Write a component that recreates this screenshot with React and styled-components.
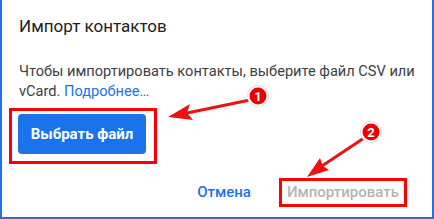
import React from "react";
import styled, { createGlobalStyle } from "styled-components";

const GlobalStyle = createGlobalStyle`
  html, body {
    margin: 0;
    padding: 0;
    background: #ffffff;
  }
  * {
    box-sizing: border-box;
  }
`;

const Dialog = styled.div`
  position: relative;
  width: 434px;
  height: 219px;
  background: #ffffff;
  border: 2px solid #1f72e6;
  border-top: none;
  padding: 16px 25px 11px 17px;
  display: flex;
  flex-direction: column;
  font-family: Roboto, "Liberation Sans", sans-serif;
  overflow: hidden;
`;

const Title = styled.h2`
  margin: 0;
  font-size: 17px;
  line-height: 20px;
  font-weight: 400;
  color: #202124;
`;

const Text = styled.p`
  margin: 25px -12px 0 0;
  font-size: 14.6px;
  line-height: 20px;
  color: #3c4043;
`;

const Link = styled.a`
  color: #1a73e8;
  text-decoration: none;
`;

const Highlight = styled.div`
  align-self: ${(p) => (p.$end ? "auto" : "flex-start")};
  border: 3px solid #ff0000;
  padding: ${(p) => p.$pad};
  margin-left: ${(p) => (p.$end ? "0" : "-10px")};
  margin-top: ${(p) => (p.$end ? "0" : "7px")};
`;

const PrimaryButton = styled.button`
  display: block;
  width: 128px;
  height: 40px;
  border: none;
  border-radius: 4px;
  background: #1a73e8;
  color: #ffffff;
  font-family: Roboto, "Liberation Sans", sans-serif;
  font-size: 15px;
  font-weight: 700;
  padding: 0;
  cursor: pointer;
`;

const Footer = styled.div`
  margin-top: 14px;
  display: flex;
  justify-content: flex-end;
  align-items: center;
  gap: 20px;
`;

const TextButton = styled.button`
  border: none;
  background: none;
  padding: 0 ${(p) => (p.$tight ? "0" : "8px")};
  height: 23px;
  line-height: 23px;
  font-family: Roboto, "Liberation Sans", sans-serif;
  font-size: 15px;
  font-weight: 500;
  color: ${(p) => (p.disabled ? "#b3b4b6" : "#1a73e8")};
  cursor: ${(p) => (p.disabled ? "default" : "pointer")};
`;

const Overlay = styled.svg`
  position: absolute;
  left: 0;
  top: 0;
  pointer-events: none;
`;

function Badge({ cx, cy, n }) {
  return (
    <g>
      <circle cx={cx} cy={cy} r="11" fill="#e2e2e2" />
      <circle cx={cx} cy={cy} r="10" fill="#ffffff" />
      <circle cx={cx} cy={cy} r="8.5" fill="#ee0000" />
      <text
        x={cx}
        y={cy + 4.5}
        textAnchor="middle"
        fontFamily="Roboto, 'Liberation Sans', sans-serif"
        fontWeight="700"
        fontSize="13"
        fill="#ffffff"
      >
        {n}
      </text>
    </g>
  );
}

function Arrows() {
  return (
    <Overlay width="434" height="219" viewBox="0 0 434 219">
      <line x1="248" y1="100" x2="185" y2="113" stroke="#ee1111" strokeWidth="3" strokeLinecap="round" />
      <polygon points="166,117 188,104 185,113 191,120" fill="#ee1111" />
      <Badge cx={256} cy={96} n="1" />
      <line x1="362" y1="138" x2="320" y2="166" stroke="#ee1111" strokeWidth="3" strokeLinecap="round" />
      <polygon points="305,177 318,158 321,166 327,170" fill="#ee1111" />
      <Badge cx={369} cy={132} n="2" />
    </Overlay>
  );
}

export default function App() {
  return (
    <>
      <GlobalStyle />
      <Dialog>
        <Title>Импорт контактов</Title>
        <Text>
          Чтобы импортировать контакты, выберите файл CSV или vCard.{" "}
          <Link href="#">Подробнее…</Link>
        </Text>
        <Highlight $pad="3px 8px 7px 6px">
          <PrimaryButton>Выбрать файл</PrimaryButton>
        </Highlight>
        <Footer>
          <TextButton>Отмена</TextButton>
          <Highlight $end $pad="0 5px">
            <TextButton $tight disabled>
              Импортировать
            </TextButton>
          </Highlight>
        </Footer>
        <Arrows />
      </Dialog>
    </>
  );
}
